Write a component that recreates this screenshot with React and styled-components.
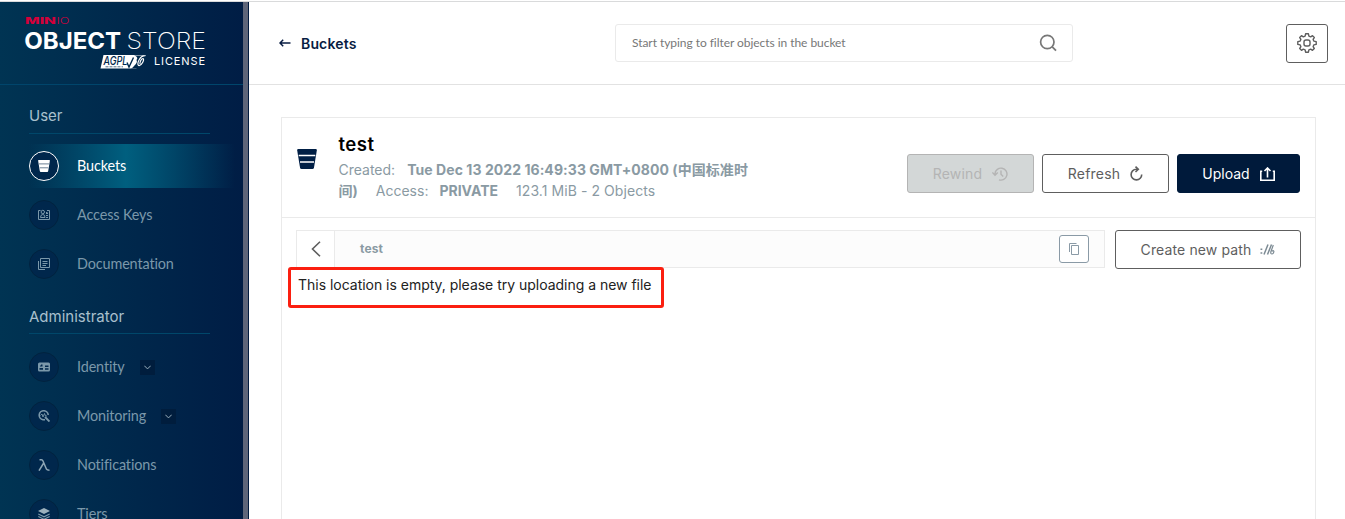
import React from "react";
import styled, { createGlobalStyle, css } from "styled-components";

const Global = createGlobalStyle`
  *, *::before, *::after { box-sizing: border-box; }
  html, body { margin: 0; padding: 0; overflow: hidden; background: #fff; }
  body { font-family: Inter, "Noto Sans CJK SC", sans-serif; }
  svg { display: block; flex: none; }
`;

const Page = styled.div`
  display: flex;
  height: 519px;
  padding-top: 1px;
  overflow: hidden;
`;

const Sidebar = styled.aside`
  width: 249px;
  flex: none;
  display: flex;
  border-top: 1px solid #d9dadb;
  background: #001a3f;
  overflow: hidden;
`;

const SidebarBody = styled.div`
  width: 243px;
  background: linear-gradient(90deg, #003453 0%, #001d45 100%);
`;

const ScrollBar = styled.div`
  width: 5px;
  background: #5e6579;
`;

const Brand = styled.div`
  height: 83px;
  border-bottom: 1px solid #00456b;
`;

const GroupTitle = styled.div`
  height: ${(p) => p.$height}px;
  margin: ${(p) => p.$margin};
  width: 181px;
  border-bottom: 1px solid #00476a;
  color: #a9c0cd;
  font-size: 15px;
  line-height: 13px;
`;

const NavItem = styled.div`
  height: 44px;
  margin: 0 0 5px 29px;
  width: 206px;
  display: flex;
  align-items: center;
  font-family: Lato, sans-serif;
  font-size: 14.4px;
  color: #7b98aa;
  ${(p) =>
    p.$active &&
    css`
      color: #fff;
      background: linear-gradient(90deg, rgba(0, 95, 127, 0) 0%, #005f7f 47%, rgba(0, 95, 127, 0) 100%);
    `}
`;

const NavIcon = styled.span`
  width: 30px;
  height: 30px;
  flex: none;
  margin-right: 18px;
  border-radius: 50%;
  display: flex;
  align-items: center;
  justify-content: center;
  background: #00274c;
  border: 1px solid ${(p) => (p.$active ? "#fff" : "#00233f")};
`;

const NavLabel = styled.span`
  padding-bottom: 1px;
  letter-spacing: -0.12px;
`;

const Expander = styled.span`
  width: 15px;
  height: 15px;
  margin-left: 15px;
  display: flex;
  align-items: center;
  justify-content: center;
  background: #001d3d;
`;

const Main = styled.main`
  flex: 1;
  min-width: 0;
  border-top: 1px solid #d9dadb;
`;

const Header = styled.header`
  height: 83px;
  border-bottom: 1px solid #e2e2e2;
  display: flex;
  align-items: center;
  padding: 0 17px 0 30px;
`;

const BackLink = styled.div`
  width: 336px;
  display: flex;
  align-items: center;
  gap: 10px;
  color: #081c42;
  font-size: 14px;
  font-weight: 600;
  line-height: 20px;
  letter-spacing: 0.16px;
`;

const BackLabel = styled.span`
  padding-top: 2px;
`;

const SearchBox = styled.div`
  width: 458px;
  height: 38px;
  display: flex;
  align-items: center;
  justify-content: space-between;
  padding: 0 15px 0 16px;
  border: 1px solid #eaeaea;
  border-radius: 3px;
  color: #777;
  font-family: Lato, sans-serif;
  font-size: 12px;
  letter-spacing: -0.05px;
`;

const Placeholder = styled.span`
  padding-bottom: 2px;
`;

const SettingsButton = styled.div`
  width: 42px;
  height: 39px;
  margin: 1px 0 0 auto;
  border: 1px solid #5e5e5e;
  border-radius: 3px;
  display: flex;
  align-items: center;
  justify-content: center;
  padding-bottom: 2px;
`;

const Card = styled.section`
  margin: 32px 29px 0 32px;
  height: 420px;
  border: 1px solid #eaeaea;
`;

const CardHead = styled.div`
  height: 100px;
  border-bottom: 1px solid #eaeaea;
  display: flex;
  padding: 0 15px;
`;

const BucketMark = styled.div`
  width: 41px;
  padding-top: 31px;
`;

const Details = styled.div`
  width: 440px;
  padding: 14px 0 0 0.5px;
`;

const BucketName = styled.h1`
  margin: 0;
  height: 27px;
  font-size: 18.6px;
  line-height: 25px;
  font-weight: 600;
  letter-spacing: 0.45px;
  color: #000;
`;

const Meta = styled.div`
  font-size: 14px;
  line-height: 21px;
  color: #8a9aa3;
  white-space: nowrap;
`;

const Value = styled.b`
  margin-left: ${(p) => p.$left || "0"};
  letter-spacing: ${(p) => p.$spacing || "0"};
  font-weight: 700;
`;

const Spaced = styled.span`
  margin-left: ${(p) => p.$left || "0"};
  letter-spacing: ${(p) => p.$spacing || "0"};
`;

const Actions = styled.div`
  margin: 36px 0 0 auto;
  display: flex;
  gap: 8px;
`;

const Button = styled.div`
  width: ${(p) => p.$width}px;
  height: 39px;
  flex: none;
  display: flex;
  align-items: center;
  justify-content: center;
  gap: ${(p) => p.$gap || 10}px;
  border: 1px solid #5e5e5e;
  border-radius: 3px;
  font-size: 14px;
  letter-spacing: ${(p) => p.$spacing || "0.2px"};
  color: #5e5e5e;
  background: #fff;
  ${(p) => p.$kind === "disabled" && css`background: #d3d7d7; border-color: #b4b4b4; color: #b4b4b4;`}
  ${(p) => p.$kind === "primary" && css`background: #001a3b; border-color: #001a3b; color: #fff;`}
`;

const PathRow = styled.div`
  display: flex;
  padding: 12px 14px 0;
  gap: 10px;
`;

const PathBar = styled.div`
  width: 809px;
  height: 38px;
  display: flex;
  align-items: center;
  border: 1px solid #eaeaea;
  background: #fcfcfc;
`;

const PathBack = styled.div`
  width: 38px;
  height: 36px;
  display: flex;
  align-items: center;
  justify-content: center;
  border-right: 1px solid #eaeaea;
  background: #fff;
`;

const PathName = styled.div`
  margin-left: 25px;
  padding-bottom: 1px;
  flex: 1;
  font-size: 12px;
  font-weight: 700;
  letter-spacing: 0.15px;
  color: #8a9aa3;
`;

const CopyButton = styled.div`
  width: 30px;
  height: 28px;
  margin-right: 15px;
  border: 1px solid #8a9aa6;
  border-radius: 3px;
  display: flex;
  align-items: center;
  justify-content: center;
  background: #fff;
`;

const EmptyNotice = styled.div`
  width: 376px;
  height: 41px;
  margin: -2px 0 0 6px;
  padding: 5px 0 0 7px;
  position: relative;
  border: 3px solid #fb1f10;
  border-radius: 3px;
  font-size: 14px;
  line-height: 20px;
  letter-spacing: -0.02px;
  color: #222;
  white-space: nowrap;
`;

const Logo = () => (
  <svg width="243" height="82" viewBox="0 2 243 82">
    <g fontFamily="Inter, sans-serif">
      <text x="25" y="24" fontSize="9.200" fontWeight="800" fill="#d4003a" textLength="31" lengthAdjust="spacingAndGlyphs">MIN</text>
      <text x="56.500" y="24" fontSize="9.200" fontWeight="300" fill="#d4003a" textLength="13" lengthAdjust="spacingAndGlyphs">IO</text>
    </g>
    <g fill="#fff" fontFamily="Inter, sans-serif">
      <text x="24.200" y="48.500" fontSize="23.400" fontWeight="700" textLength="97" lengthAdjust="spacingAndGlyphs">OBJECT</text>
      <text x="126.500" y="48.500" fontSize="23.400" fontWeight="250" textLength="79.500" lengthAdjust="spacingAndGlyphs">STORE</text>
      <text x="154" y="65" fontSize="11" textLength="51" lengthAdjust="spacing">LICENSE</text>
    </g>
    <path d="M103.500 55H146L143 61Q140 67 136 68.500H100.500Z" fill="#fff" />
    <text x="103.500" y="65" fontSize="11.500" fontWeight="500" fontStyle="italic" fontFamily="Inter, sans-serif" fill="#00294c" textLength="24" lengthAdjust="spacingAndGlyphs">AGPL</text>
    <path d="M105.500 66.800H123" stroke="#54718a" strokeWidth="1" strokeDasharray="3 1" />
    <path d="M127 62.500L129 67L133.500 57.500" fill="none" stroke="#00294c" strokeWidth="1.400" />
    <path d="M145.500 55.500L134 55.500Q139 57 136.500 60Q138 62.500 134 66Q133 67.500 131 68.500H137Q144 66 146 58Z" fill="#00294c" />
    <path d="M144.800 56C141 54.500 136.500 63 138.500 65.500C141.500 66.500 145 59 143 58.500C141.500 58.500 139.500 62 140 64" fill="none" stroke="#fff" strokeWidth="1.200" />
  </svg>
);

const BucketIcon = ({ size, color, gap }) => (
  <svg width={size} height={size} viewBox="0 0 20 20">
    <path d="M1.200 0H18.800Q20 0 19.800 1.400L17 18.500Q16.700 20 15.500 20H4.500Q3.300 20 3 18.500L0.200 1.400Q0 0 1.200 0Z" fill={color} />
    <path d="M1.700 6.500H18.300M3 13H17" stroke={gap} strokeWidth="1.500" />
  </svg>
);

const AccessIcon = () => (
  <svg width="12" height="12" viewBox="0 0 12 12" fill="none" stroke="#7b98aa">
    <path d="M2.500 1.500H.5V10.500H11.500V1.500H9" />
    <circle cx="4.800" cy="3" r="1.700" />
    <path d="M2.500 8.500Q2.500 5.500 4.800 5.500T7 8.500ZM8.500 3V5M8 6.500H10M8 8.500H10M9.500 3.500V5" />
  </svg>
);

const DocsIcon = () => (
  <svg width="12" height="12" viewBox="0 0 12 12" fill="none" stroke="#7b98aa">
    <path d="M2.500 .5H11.500V9.500H2.500ZM.5 3V11.500H7M4.500 3.500H9.500M4.500 5.500H9.500M4.500 7.500H8" />
  </svg>
);

const IdentityIcon = () => (
  <svg width="12" height="10" viewBox="0 0 12 10">
    <rect width="12" height="9" y=".5" rx="1.500" fill="#7b98aa" />
    <path d="M2 4.500V3.500H3V2.500H4.500V4.500ZM1.500 6H5V7.700H1.500ZM7 3.500H10.500V5H7ZM7 6.300H10.500V7.700H7Z" fill="#00274c" />
  </svg>
);

const MonitoringIcon = () => (
  <svg width="12" height="12" viewBox="0 0 12 12" fill="none" stroke="#7b98aa">
    <path d="M10.200 5A4.500 4.500 0 1 0 5 9.700H7" strokeWidth="1.600" />
    <path d="M2.500 5.500L4 4L5 7L6.500 3.500L7.500 6H9" strokeWidth=".9" />
    <path d="M7 7L11.500 11.500" strokeWidth="1.900" />
  </svg>
);

const LambdaIcon = () => (
  <svg width="12" height="12" viewBox="0 0 12 12" fill="none" stroke="#8da6b5" strokeWidth="1.500">
    <path d="M1.500 .8H3.500Q4.500 .8 5 2L8.500 10.200Q9 11.200 11.500 11.200M5.700 4L1 11.700" />
  </svg>
);

const TiersIcon = () => (
  <svg width="12" height="12" viewBox="0 0 12 12">
    <path d="M6 0L12 3L6 6L0 3Z" fill="#9cb1bd" />
    <path d="M.3 6L6 8.800L11.700 6M.3 8.500L6 11.300L11.700 8.500" fill="none" stroke="#7b98aa" strokeWidth="1.100" />
  </svg>
);

const ChevronDown = () => (
  <svg width="7" height="5" viewBox="0 0 7 5" fill="none" stroke="#9bb0bd">
    <path d="M.3 .7L3.500 3.900L6.700 .7" />
  </svg>
);

const BackArrow = () => (
  <svg width="12" height="8" viewBox="0 0 12 8" fill="none" stroke="#081c42" strokeWidth="1.500">
    <path d="M11.500 4H1M4.200 .8L1 4L4.200 7.200" />
  </svg>
);

const SearchIcon = () => (
  <svg width="18" height="18" viewBox="0 0 18 18" fill="none" stroke="#777" strokeWidth="1.700">
    <circle cx="8.300" cy="8" r="6.700" />
    <path d="M13 12.700L17 16.700" />
  </svg>
);

const GearIcon = () => (
  <svg width="20" height="20" viewBox="0 0 20 20" fill="none" stroke="#5e5e5e" strokeWidth="1.400" strokeLinejoin="round">
    <path d="M8.600 .8H11.400L11.900 3.200L13.700 3.900L15.500 2.700L17.300 4.500L16.100 6.300L16.800 8.100L19.200 8.600V11.400L16.800 11.900L16.100 13.700L17.300 15.500L15.500 17.300L13.700 16.100L11.900 16.800L11.400 19.200H8.600L8.100 16.800L6.300 16.100L4.500 17.300L2.700 15.500L3.900 13.700L3.200 11.900L.8 11.400V8.600L3.200 8.100L3.900 6.300L2.700 4.500L4.500 2.700L6.300 3.900L8.100 3.200Z" />
    <rect x="7" y="7" width="6" height="6" rx="2" />
  </svg>
);

const RewindIcon = () => (
  <svg width="16" height="14" viewBox="0 0 16 14" fill="none" stroke="#b4b4b4" strokeWidth="1.400">
    <path d="M3 8V6.500A6 6 0 1 1 7 12.800M.4 5.500L3 8.300L5.800 5.500M9 3.500V7.200L11.200 9.400" />
  </svg>
);

const RefreshIcon = () => (
  <svg width="13" height="15" viewBox="0 0 13 15" fill="none" stroke="#5e5e5e" strokeWidth="1.600">
    <path d="M8 3.300H6.300A5.300 5.300 0 1 0 11.700 8.500M5.500 .6L8.300 3.300L5.500 6" />
  </svg>
);

const UploadIcon = () => (
  <svg width="15" height="14" viewBox="0 0 15 14" fill="none" stroke="#fff" strokeWidth="1.600">
    <path d="M2.200 4.200H.8V13.200H14.200V4.200H12.800M7.500 10.500V1M4.500 4L7.500 1L10.500 4" />
  </svg>
);

const ChevronLeft = () => (
  <svg width="10" height="16" viewBox="0 0 10 16" fill="none" stroke="#5e5e5e" strokeWidth="1.600">
    <path d="M9 .7L1.500 8L9 15.300" />
  </svg>
);

const CopyIcon = () => (
  <svg width="12" height="12" viewBox="0 0 12 12" fill="none" stroke="#8a9aa6">
    <path d="M3.500 2.500H10.500V11.500H3.500ZM1.500 9V.5H8.500" />
  </svg>
);

const PathIcon = () => (
  <svg width="15" height="11" viewBox="0 0 15 11" fill="none" stroke="#7d8b94" strokeWidth="1.500">
    <path d="M.5 5.300H2.300M.5 9H2.300M4 10.500L8 .5M7.500 10.500L11.500 .5" />
    <path d="M13.300 1L10.800 8Q10.500 10 12 10T13.900 7.500Q13.500 5.800 11.800 7.200" strokeWidth="1.200" />
  </svg>
);

const Nav = ({ icon, label, active, expand }) => (
  <NavItem $active={active}>
    <NavIcon $active={active}>{icon}</NavIcon>
    <NavLabel>{label}</NavLabel>
    {expand && <Expander><ChevronDown /></Expander>}
  </NavItem>
);

export default function App() {
  return (
    <>
      <Global />
      <Page>
        <Sidebar>
          <SidebarBody>
            <Brand><Logo /></Brand>
            <GroupTitle $height={25} $margin="24px 0 10px 29px">User</GroupTitle>
            <Nav active label="Buckets" icon={<BucketIcon size={12} color="#fff" gap="#5c7389" />} />
            <Nav label="Access Keys" icon={<AccessIcon />} />
            <Nav label="Documentation" icon={<DocsIcon />} />
            <GroupTitle $height={24} $margin="24px 0 11px 29px">Administrator</GroupTitle>
            <Nav label="Identity" expand icon={<IdentityIcon />} />
            <Nav label="Monitoring" expand icon={<MonitoringIcon />} />
            <Nav label="Notifications" icon={<LambdaIcon />} />
            <Nav label="Tiers" icon={<TiersIcon />} />
          </SidebarBody>
          <ScrollBar />
        </Sidebar>
        <Main>
          <Header>
            <BackLink><BackArrow /><BackLabel>Buckets</BackLabel></BackLink>
            <SearchBox><Placeholder>Start typing to filter objects in the bucket</Placeholder><SearchIcon /></SearchBox>
            <SettingsButton><GearIcon /></SettingsButton>
          </Header>
          <Card>
            <CardHead>
              <BucketMark><BucketIcon size={20} color="#001f45" gap="#fff" /></BucketMark>
              <Details>
                <BucketName>test</BucketName>
                <Meta>Created:<Value $left="12px" $spacing="0.06px">Tue Dec 13 2022 16:49:33 GMT+0800 (中国标准时</Value></Meta>
                <Meta>
                  <Value>间)</Value>
                  <Spaced $left="18px">Access:</Spaced>
                  <Value $left="11px">PRIVATE</Value>
                  <Spaced $left="18px" $spacing="0.07px">123.1 MiB - 2 Objects</Spaced>
                </Meta>
              </Details>
              <Actions>
                <Button $width={127} $kind="disabled">Rewind<RewindIcon /></Button>
                <Button $width={127}>Refresh<RefreshIcon /></Button>
                <Button $width={123} $kind="primary" $spacing="0">Upload<UploadIcon /></Button>
              </Actions>
            </CardHead>
            <PathRow>
              <PathBar>
                <PathBack><ChevronLeft /></PathBack>
                <PathName>test</PathName>
                <CopyButton><CopyIcon /></CopyButton>
              </PathBar>
              <Button $width={186} $gap={9} $spacing="0.12px">Create new path<PathIcon /></Button>
            </PathRow>
            <EmptyNotice>This location is empty, please try uploading a new file</EmptyNotice>
          </Card>
        </Main>
      </Page>
    </>
  );
}
